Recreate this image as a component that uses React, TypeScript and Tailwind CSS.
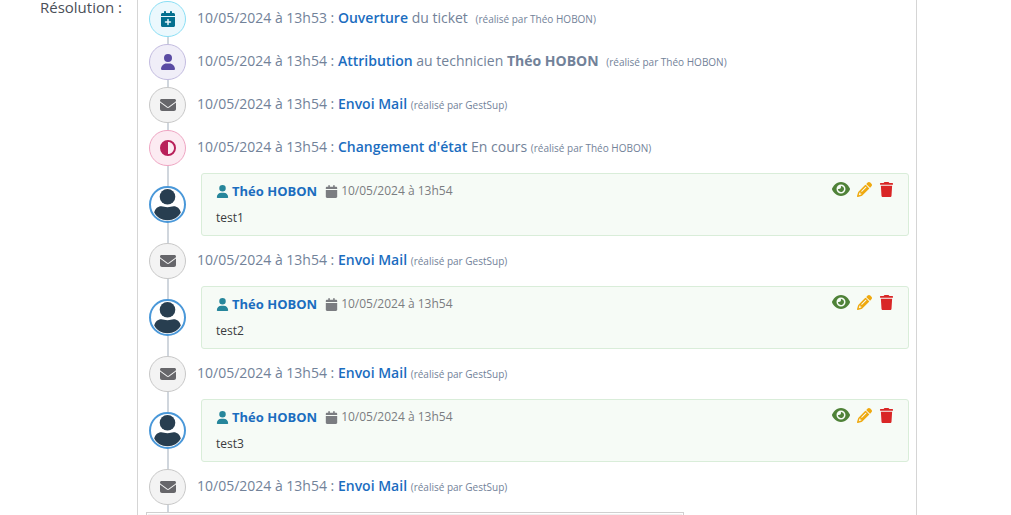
import React from "react";
import {
  FaCalendar,
  FaCalendarPlus,
  FaCircleHalfStroke,
  FaEnvelope,
  FaEye,
  FaPencil,
  FaTrash,
  FaUser,
} from "react-icons/fa6";

type EventKind = "open" | "assign" | "mail" | "state";

interface EventEntry {
  type: "event";
  kind: EventKind;
  date: string;
  title: string;
  text?: string;
  strong?: string;
  author: string;
  wide?: boolean;
}

interface CommentEntry {
  type: "comment";
  author: string;
  date: string;
  text: string;
}

const mail: EventEntry = {
  type: "event",
  kind: "mail",
  date: "10/05/2024 à 13h54",
  title: "Envoi Mail",
  author: "GestSup",
};

const comment = (text: string): CommentEntry => ({
  type: "comment",
  author: "Théo HOBON",
  date: "10/05/2024 à 13h54",
  text,
});

const entries: (EventEntry | CommentEntry)[] = [
  {
    type: "event",
    kind: "open",
    date: "10/05/2024 à 13h53",
    title: "Ouverture",
    text: "du ticket",
    author: "Théo HOBON",
    wide: true,
  },
  {
    type: "event",
    kind: "assign",
    date: "10/05/2024 à 13h54",
    title: "Attribution",
    text: "au technicien",
    strong: "Théo HOBON",
    author: "Théo HOBON",
    wide: true,
  },
  mail,
  {
    type: "event",
    kind: "state",
    date: "10/05/2024 à 13h54",
    title: "Changement d'état",
    text: "En cours",
    author: "Théo HOBON",
  },
  comment("test1"),
  mail,
  comment("test2"),
  mail,
  comment("test3"),
  mail,
];

const badges: Record<EventKind, { icon: React.ReactNode; style: string }> = {
  open: {
    icon: <FaCalendarPlus />,
    style: "border-[#8bdff5] bg-[#ebf8fd] text-[#04708f]",
  },
  assign: {
    icon: <FaUser />,
    style: "border-[#c3bce0] bg-[#f0eef8] text-[#5a4ba3]",
  },
  mail: {
    icon: <FaEnvelope />,
    style: "border-[#c8c8c8] bg-[#f3f3f3] text-[#66666a]",
  },
  state: {
    icon: <FaCircleHalfStroke />,
    style: "border-[#efa6c3] bg-[#fcebf2] text-[#b8205a]",
  },
};

const Avatar: React.FC = () => (
  <svg
    viewBox="0 0 37 37"
    className="relative mt-[13px] h-[37px] w-[37px] shrink-0"
    aria-hidden="true"
  >
    <circle cx="18.5" cy="18.5" r="17.5" fill="#fff" stroke="#4a98d9" strokeWidth="2" />
    <circle cx="18.5" cy="10.7" r="7.8" fill="#283e50" />
    <path
      d="M5.2 26.5C6.200 22.400 9 20.300 12.200 20.300c2.400 0 3.600 1 6.300 1s3.900-1 6.300-1c3.200 0 6 2.100 7 6.200C29.200 31.300 24.500 34.200 18.500 34.200S7.800 31.300 5.200 26.500Z"
      fill="#283e50"
    />
  </svg>
);

const EventRow: React.FC<{ entry: EventEntry }> = ({ entry }) => {
  const badge = badges[entry.kind];
  return (
    <li className="flex h-[43px] items-start gap-[11px]">
      <span
        className={`relative flex h-[36px] w-[37px] shrink-0 items-center justify-center rounded-full border text-[16px] ${badge.style}`}
      >
        {badge.icon}
      </span>
      <p className="mt-[7px] text-sm leading-5 text-[#728299]">
        {entry.date} :{" "}
        <span className="font-semibold text-[#1b6dbf]">{entry.title}</span>{" "}
        {entry.text && <>{entry.text} </>}
        {entry.strong && <strong className="font-bold">{entry.strong} </strong>}
        <span className={entry.wide ? "ml-1 text-[10px]" : "text-[10px]"}>
          (réalisé par {entry.author})
        </span>
      </p>
    </li>
  );
};

const CommentRow: React.FC<{ entry: CommentEntry }> = ({ entry }) => (
  <li className="flex h-[70px] items-start gap-[15px]">
    <Avatar />
    <article className="flex h-[63px] grow items-start justify-between rounded-[3px] border border-[#d9edd9] bg-[#f6fbf6] pr-[14px] pl-[14px]">
      <div>
        <p className="mt-[7px] flex items-center text-xs leading-5 text-[#7b7d81]">
          <FaUser className="mr-[3px] text-[13px] text-[#26869b]" />
          <strong className="mr-2 text-[13px] font-bold text-[#1b6dbf]">
            {entry.author}
          </strong>
          <FaCalendar className="mr-[3px] text-[13px]" />
          {entry.date}
        </p>
        <p className="mt-[7px] text-xs leading-5 text-[#393b40]">{entry.text}</p>
      </div>
      <div className="mt-[6px] flex items-center gap-[7px] text-[15px]">
        <button type="button" aria-label="Voir" className="text-[18px] text-[#4f8238]">
          <FaEye />
        </button>
        <button type="button" aria-label="Modifier" className="text-[#efa90f]">
          <FaPencil />
        </button>
        <button type="button" aria-label="Supprimer" className="text-[#d92626]">
          <FaTrash />
        </button>
      </div>
    </article>
  </li>
);

const App: React.FC = () => {
  return (
    <div className="flex h-screen overflow-hidden bg-white pr-[94px] font-['Open_Sans',sans-serif]">
      <div className="w-[137px] shrink-0 pr-[15px] text-right text-[15px] text-[#4a4f57]">
        <span className="block leading-[14px]">Résolution :</span>
      </div>
      <section
        aria-label="Résolution"
        className="min-w-0 grow border-x border-[#d5d5d5] pt-px"
      >
        <div className="relative pr-[7px] pl-[11px]">
          <div className="absolute top-2 bottom-0 left-[29px] w-[2px] bg-[#d0d6dd]" />
          <ul>
            {entries.map((entry, i) =>
              entry.type === "event" ? (
                <EventRow key={i} entry={entry} />
              ) : (
                <CommentRow key={i} entry={entry} />
              )
            )}
          </ul>
        </div>
        <div className="ml-2 h-40 max-w-[538px] border border-[#d0d0d0] bg-white p-px">
          <div className="h-8 bg-[#f0f0f0]" />
        </div>
      </section>
    </div>
  );
};

export default App;
